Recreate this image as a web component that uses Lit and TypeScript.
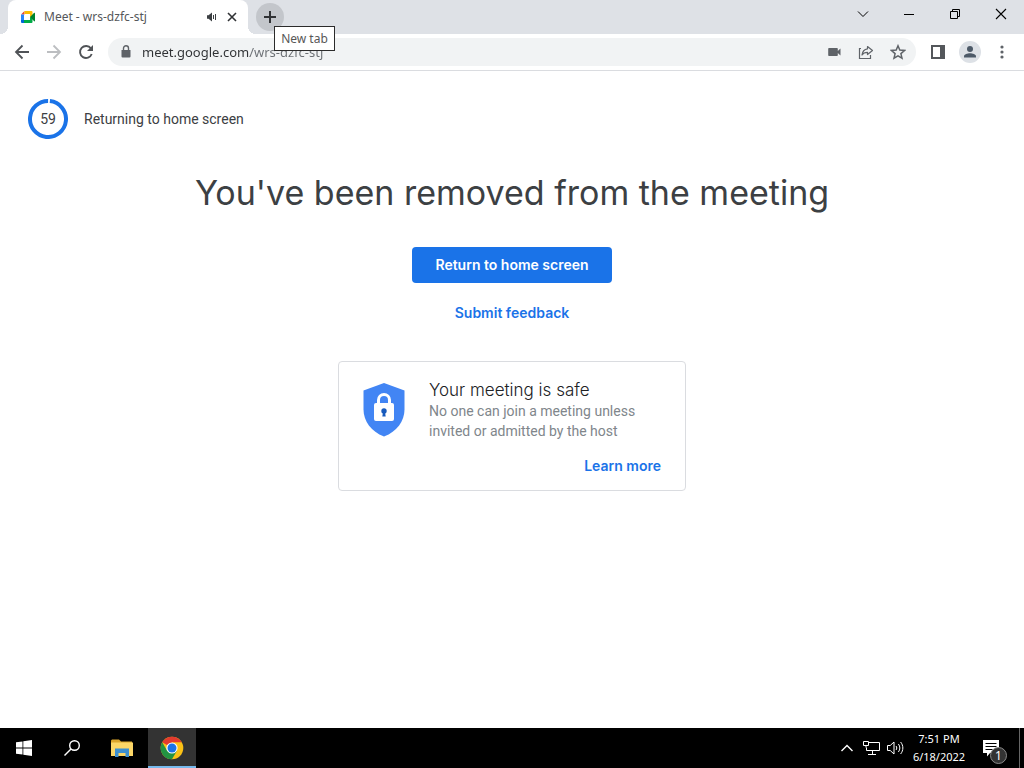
import { LitElement, html, css } from "lit";
import { customElement, property } from "lit/decorators.js";

@customElement("browser-tabs")
class BrowserTabs extends LitElement {
  @property() title = "";

  static styles = css`
    :host { display: flex; height: 34px; background: #dee1e6; padding-left: 8px; box-sizing: border-box; }
    button { border: 0; padding: 0; background: none; display: grid; place-items: center; color: #202124; }
    svg { display: block; }
    .tab { position: relative; width: 240px; box-sizing: border-box; background: #fff; border-radius: 8px 8px 0 0; display: flex; align-items: center; padding: 0 6px 0 12px; }
    .tab::before, .tab::after { content: ""; position: absolute; bottom: 0; width: 8px; height: 8px; }
    .tab::before { left: -8px; background: radial-gradient(circle at 0 0, transparent 8px, #fff 8px); }
    .tab::after { right: -8px; background: radial-gradient(circle at 100% 0, transparent 8px, #fff 8px); }
    .name { flex: 1; margin-left: 8px; font: 12px/16px "Noto Sans", "Open Sans", sans-serif; color: #55575a; white-space: nowrap; }
    .mute, .close { width: 20px; height: 20px; }
    .plus { position: relative; width: 28px; height: 28px; margin: 3px 0 0 8px; border-radius: 50%; background: #c3c6cb; }
    .tip { position: absolute; z-index: 2; left: 18px; top: 23px; box-sizing: border-box; width: 61px; height: 25px; border: 1px solid #2b2b2b; background: #fff; color: #575757; font: 12px/23px "Noto Sans", "Open Sans", sans-serif; text-align: center; white-space: nowrap; }
    .controls { margin-left: auto; display: flex; }
    .controls button { width: 46px; height: 28px; color: #000; }
  `;

  render() {
    return html`
      <div class="tab">
        <svg width="16" height="16" viewBox="0 0 16 16" aria-hidden="true">
          <path d="M1 5.500L4.500 2v3.500z" fill="#ea4335" />
          <path d="M4.500 2h7a1 1 0 0 1 1 1v4L10 9V5H4.500z" fill="#fbbc04" />
          <path d="M1 5.500h3V11H1z" fill="#2684fc" />
          <path d="M1 11h3v3H2a1 1 0 0 1-1-1z" fill="#0066da" />
          <path d="M4 11h6V8l2.500 1.500V13a1 1 0 0 1-1 1H4z" fill="#00ac47" />
          <path d="M10 8l4.200-4.200c.4-.3.8 0 .8.400v7.700c0 .4-.4.700-.8.400z" fill="#00832d" />
        </svg>
        <span class="name">${this.title}</span>
        <button class="mute" aria-label="Mute tab">
          <svg width="12" height="10" viewBox="0 0 12 10" fill="none" stroke="#3c4043">
            <path d="M1 3.200h1.500L6 .500v9L2.500 6.800H1z" fill="#3c4043" stroke="none" />
            <path d="M7.500 3v4M9.500 2v6" stroke-width="1" />
          </svg>
        </button>
        <button class="close" aria-label="Close tab">
          <svg width="10" height="10" viewBox="0 0 10 10" stroke="#303235" stroke-width="1.600"><path d="M1 1l8 8M9 1L1 9" /></svg>
        </button>
      </div>
      <button class="plus" aria-label="New tab" aria-describedby="tip">
        <svg width="12" height="12" viewBox="0 0 12 12" stroke="#303235" stroke-width="2"><path d="M6 0v12M0 6h12" /></svg>
        <span class="tip" id="tip" role="tooltip">New tab</span>
      </button>
      <div class="controls">
        <button aria-label="Search tabs"><svg width="12" height="12" viewBox="0 0 12 12" fill="none" stroke="currentColor"><path d="M1 3.500l5 5 5-5" /></svg></button>
        <button aria-label="Minimize"><svg width="12" height="12" viewBox="0 0 12 12" stroke="currentColor"><path d="M1 6.500h10" /></svg></button>
        <button aria-label="Restore"><svg width="12" height="12" viewBox="0 0 12 12" fill="none" stroke="currentColor"><path d="M1.500 3.500h7v7h-7zM3.500 3.500v-2h7v7h-2" /></svg></button>
        <button aria-label="Close window"><svg width="12" height="12" viewBox="0 0 12 12" stroke="currentColor" stroke-width="1.100"><path d="M1 1l10 10M11 1L1 11" /></svg></button>
      </div>
    `;
  }
}

@customElement("browser-toolbar")
class BrowserToolbar extends LitElement {
  @property() url = "";

  static styles = css`
    :host { display: flex; align-items: center; height: 37px; box-sizing: border-box; padding: 0 6px; border-bottom: 1px solid #dadce0; background: #fff; }
    button { border: 0; padding: 0; background: none; width: 32px; height: 28px; display: grid; place-items: center; color: #5f6368; flex: none; }
    svg { display: block; }
    .nav { color: #505357; }
    .nav[disabled] { color: #bcbec1; }
    .omnibox { flex: 1; min-width: 0; height: 28px; margin: 0 6px; padding: 0 2px 0 8px; border-radius: 14px; background: #f1f3f4; display: flex; align-items: center; }
    .lock { width: 20px; }
    input { flex: 1; min-width: 0; margin-left: 6px; border: 0; padding: 0; outline: 0; font: 13px/20px "Noto Sans", "Open Sans", sans-serif; color: transparent; background: linear-gradient(90deg, #303235 108px, #6a6e73 108px); -webkit-background-clip: text; background-clip: text; }
    .avatar { width: 22px; height: 22px; border-radius: 50%; background: #dde1e6; display: grid; place-items: center; }
  `;

  render() {
    return html`
      <button class="nav" aria-label="Back"><svg width="16" height="16" viewBox="0 0 16 16" fill="none" stroke="currentColor" stroke-width="1.800"><path d="M15 8H2M8.500 1.500L2 8l6.500 6.500" /></svg></button>
      <button class="nav" aria-label="Forward" disabled><svg width="16" height="16" viewBox="0 0 16 16" fill="none" stroke="currentColor" stroke-width="1.800"><path d="M1 8h13M7.500 1.500L14 8l-6.500 6.500" /></svg></button>
      <button class="nav" aria-label="Reload"><svg width="16" height="16" viewBox="0 0 16 16"><path d="M12.900 4.400A6 6 0 1 0 13.700 10" fill="none" stroke="currentColor" stroke-width="1.900" /><path d="M15 1v6H9z" fill="currentColor" /></svg></button>
      <div class="omnibox">
        <button class="lock" aria-label="Site information"><svg width="10" height="14" viewBox="0 0 10 14"><path d="M.500 5h9v6.500a1 1 0 0 1-1 1h-7a1 1 0 0 1-1-1z" fill="currentColor" /><path d="M2.500 5.500V3.300a2.500 2.500 0 0 1 5 0v2.200" fill="none" stroke="currentColor" stroke-width="1.400" /></svg></button>
        <input type="text" aria-label="Address" .value=${this.url} />
        <button aria-label="Camera in use"><svg width="13" height="10" viewBox="0 0 13 10" fill="currentColor"><path d="M1 1h8a.8.8 0 0 1 .8.800V4L12.500 1.500v7L9.800 6v2.200a.8.8 0 0 1-.8.800H1a.8.8 0 0 1-.8-.8V1.800A.8.8 0 0 1 1 1z" /></svg></button>
        <button aria-label="Share this page"><svg width="16" height="16" viewBox="0 0 16 16" fill="none" stroke="currentColor" stroke-width="1.200"><path d="M3 4.500H1.500v10h11V11" /><path d="M9.500 2.500l5 4-5 4V8.300c-2.500 0-4.300.7-5.500 2.700.4-3.500 2.300-5.800 5.500-6.200z" stroke-linejoin="round" /></svg></button>
        <button aria-label="Bookmark this tab"><svg width="16" height="16" viewBox="0 0 16 16" fill="none" stroke="currentColor" stroke-width="1.500"><path d="M8 1.800l1.800 4.300 4.700.4-3.600 3.100 1.100 4.600L8 11.800l-4 2.400 1.100-4.600L1.500 6.500l4.700-.4z" /></svg></button>
      </div>
      <button aria-label="Side panel"><svg width="14" height="14" viewBox="0 0 14 14"><path d="M0 0h14v14H0zM2 2v10h7V2z" fill="#54575b" fill-rule="evenodd" /></svg></button>
      <button aria-label="Profile"><span class="avatar"><svg width="14" height="14" viewBox="0 0 14 14" fill="#4d5a68"><circle cx="7" cy="4" r="3" /><path d="M1 12.500v-1.300C1 9.300 4.500 8.300 7 8.300s6 1 6 2.900v1.300z" /></svg></span></button>
      <button aria-label="Customize and control"><svg width="4" height="14" viewBox="0 0 4 14" fill="currentColor"><circle cx="2" cy="2" r="1.600" /><circle cx="2" cy="7" r="1.600" /><circle cx="2" cy="12" r="1.600" /></svg></button>
    `;
  }
}

@customElement("meeting-ended")
class MeetingEnded extends LitElement {
  @property({ type: Number }) seconds = 59;

  static styles = css`
    :host { display: block; flex: 1; background: #fff; font-family: Roboto, sans-serif; }
    .timer { display: flex; align-items: center; gap: 16px; padding: 28px 28px 0; font-size: 14px; line-height: 20px; color: #3c4043; }
    .ring { display: grid; width: 40px; height: 40px; }
    .ring > * { grid-area: 1 / 1; place-self: center; }
    main { display: flex; flex-direction: column; align-items: center; padding: 32px 16px; }
    h1 { margin: 0; font: 400 34px/44px Inter, sans-serif; color: #3c4043; text-align: center; }
    button, .link { font: 600 14px/20px Inter, sans-serif; }
    .primary { margin-top: 32px; border: 0; border-radius: 4px; padding: 8px 23px; background: #1a73e8; color: #fff; }
    .link { color: #1a73e8; text-decoration: none; }
    .feedback { margin-top: 20px; }
    .card { box-sizing: border-box; width: 100%; max-width: 348px; margin-top: 38px; border: 1px solid #dadce0; border-radius: 4px; padding: 18px 24px 14px; display: grid; grid-template-columns: 42px 1fr; column-gap: 24px; }
    .shield { margin-top: 3px; }
    h2 { margin: 0 0 1px; font: 300 17px/20px Inter, sans-serif; color: #202124; }
    p { margin: 0; font-size: 14px; line-height: 20px; color: #80868b; }
    .more { grid-column: 1 / -1; justify-self: end; margin-top: 15px; }
  `;

  render() {
    return html`
      <div class="timer">
        <div class="ring">
          <svg width="40" height="40" viewBox="0 0 40 40" aria-hidden="true">
            <circle cx="20" cy="20" r="18" pathLength="60" fill="none" stroke="#1a73e8" stroke-width="4" stroke-dasharray="${this.seconds} 60" transform="rotate(-84 20 20)" />
          </svg>
          <span>${this.seconds}</span>
        </div>
        <span>Returning to home screen</span>
      </div>
      <main>
        <h1>You've been removed from the meeting</h1>
        <button class="primary">Return to home screen</button>
        <a class="link feedback" href="#feedback">Submit feedback</a>
        <section class="card">
          <svg class="shield" width="42" height="54" viewBox="0 0 42 54" aria-hidden="true">
            <path d="M21 0l20.500 7.500v19C41.500 38 34 48.500 21 53.500 8 48.500.500 38 .500 26.500v-19z" fill="#4285f4" />
            <rect x="11" y="20" width="20" height="18" rx="2" fill="#fff" />
            <path d="M15.500 21v-4a5.500 5.500 0 0 1 11 0v4" fill="none" stroke="#fff" stroke-width="3" />
            <circle cx="21" cy="28" r="2.700" fill="#185abc" />
            <path d="M20 29h2l.7 4.500h-3.400z" fill="#185abc" />
          </svg>
          <div>
            <h2>Your meeting is safe</h2>
            <p>No one can join a meeting unless invited or admitted by the host</p>
          </div>
          <a class="link more" href="#safety">Learn more</a>
        </section>
      </main>
    `;
  }
}

@customElement("task-bar")
class TaskBar extends LitElement {
  static styles = css`
    :host { display: flex; height: 40px; background: #000; color: #fff; }
    button { position: relative; border: 0; padding: 0; background: none; color: #fff; display: grid; place-items: center; height: 40px; font: 11px/18px "Noto Sans", "Open Sans", sans-serif; }
    svg { display: block; }
    .app { width: 48px; }
    .explorer { width: 52px; }
    .active { background: #333; box-shadow: inset 0 -2px #76b9ed; }
    .tray { margin-left: auto; display: flex; }
    .icon { width: 24px; }
    .clock { width: 64px; text-align: center; }
    .notes { width: 40px; }
    .badge { position: absolute; right: 4px; bottom: 4px; box-sizing: border-box; width: 17px; height: 17px; border: 1px solid #8a8a8a; border-radius: 50%; background: #333; font-size: 12px; line-height: 15px; }
    .desktop { width: 5px; margin-left: 8px; border-left: 1px solid #666; }
  `;

  render() {
    return html`
      <button class="app" aria-label="Start"><svg width="16" height="16" viewBox="0 0 16 16" fill="#fff"><path d="M0 2.300L6.500 1.400V7.600H0zM7.300 1.300L16 0v7.600H7.300zM0 8.400h6.500v6.200L0 13.700zM7.300 8.400H16V16l-8.700-1.300z" /></svg></button>
      <button class="app" aria-label="Search"><svg width="16" height="16" viewBox="0 0 16 16" fill="none" stroke="#fff" stroke-width="1.400"><circle cx="10.500" cy="5.500" r="4.800" /><path d="M7 9L.500 15.500" /></svg></button>
      <button class="explorer" aria-label="File Explorer"><svg width="22" height="18" viewBox="0 0 22 18"><path d="M0 1.500L1 .500h7l2 2h11v4H0z" fill="#dba52c" /><path d="M0 3.500h22V17H0z" fill="#fbd667" /><path d="M4 18V9.500h14V18h-3.500v-4h-7v4z" fill="#3d8fcf" /></svg></button>
      <button class="app active" aria-label="Google Chrome"><svg width="24" height="24" viewBox="0 0 24 24"><circle cx="12" cy="12" r="11.300" fill="#fbc116" /><path d="M12 12L2.200 6.350A11.300 11.300 0 0 1 21.800 6.350H12z" fill="#e33b2e" /><path d="M2.200 6.350A11.300 11.300 0 0 0 12 23.300L16.900 14.800 12 12 7.100 14.800z" fill="#229342" /><circle cx="12" cy="12" r="5.600" fill="#fff" /><circle cx="12" cy="12" r="4.500" fill="#1a73e8" /></svg></button>
      <div class="tray">
        <button class="icon" aria-label="Show hidden icons"><svg width="12" height="8" viewBox="0 0 12 8" fill="none" stroke="#fff" stroke-width="1.400"><path d="M.500 7L6 1.500 11.500 7" /></svg></button>
        <button class="icon" aria-label="Network"><svg width="17" height="14" viewBox="0 0 17 14" fill="none" stroke="#fff"><path d="M6 1.500h10.500v8H3.500V6.500M5 13.500h8M9.500 9.500v4" /><path d="M.500.500h5v4h-5zM3 4.500v2" /></svg></button>
        <button class="icon" aria-label="Volume"><svg width="17" height="14" viewBox="0 0 17 14" fill="none" stroke="#fff"><path d="M.500 4.500h2.700L7 1v12L3.200 9.500H.500z" /><path d="M9 5c1 1.200 1 2.800 0 4M11.300 3c2 2.400 2 5.600 0 8M13.600 1c3 3.600 3 8.400 0 12" /></svg></button>
        <button class="clock"><span>7:51 PM<br />6/18/2022</span></button>
        <button class="notes" aria-label="Notifications"><svg width="16" height="17" viewBox="0 0 16 17"><path d="M0 0h16v13H7l-3 3.500V13H0z" fill="#fff" /><path d="M2.500 3.500h11M2.500 6.500h11M2.500 9.500h7" stroke="#000" /></svg><span class="badge">1</span></button>
        <button class="desktop" aria-label="Show desktop"></button>
      </div>
    `;
  }
}

@customElement("app-root")
class AppRoot extends LitElement {
  static styles = css`
    :host { display: flex; flex-direction: column; min-height: 100vh; background: #fff; }
  `;

  render() {
    return html`
      <browser-tabs title="Meet - wrs-dzfc-stj"></browser-tabs>
      <browser-toolbar url="meet.google.com/wrs-dzfc-stj"></browser-toolbar>
      <meeting-ended></meeting-ended>
      <task-bar></task-bar>
    `;
  }
}
